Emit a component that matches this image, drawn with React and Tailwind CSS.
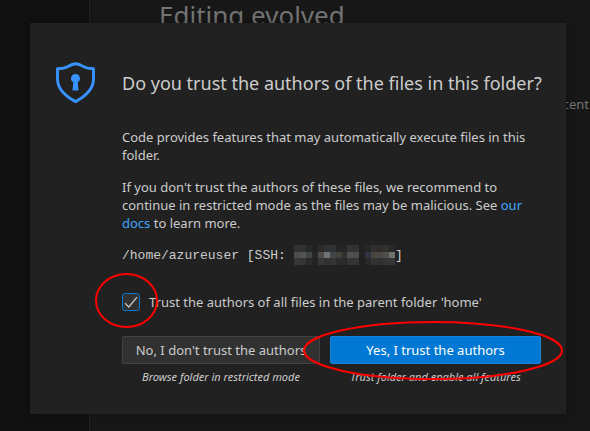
const MOSAIC = [
  ['#303332', '#2e3231', '#262929', '#202020', '#2b2b2b', '#323131', '#2f3133', '#262525', '#252626', '#343332', '#313130', '#212121', '#262626', '#31302f', '#2e2d2d', '#31302f', '#292828'],
  ['#4c4c4a', '#555553', '#434442', '#272727', '#4c4a47', '#6c7477', '#424549', '#453f3a', '#2f3030', '#51504e', '#4d4d4b', '#222222', '#2b3440', '#4a4642', '#4a4643', '#524e4a', '#70706c'],
  ['#353736', '#333534', '#292929', '#222222', '#373737', '#303030', '#353435', '#2b2b2b', '#292929', '#343434', '#343434', '#202020', '#292929', '#333333', '#2f2f2f', '#353535', '#353535'],
];

function Redacted() {
  return (
    <span className="grid h-5 w-[101px] grid-rows-[7px_6px_7px]">
      {MOSAIC.map((row, y) => (
        <span key={y} className="flex">
          {row.map((color, x) => (
            <span key={x} className="flex-1" style={{ backgroundColor: color }} />
          ))}
        </span>
      ))}
    </span>
  );
}

function Shield() {
  return (
    <svg className="h-[42px] w-10" viewBox="0 0 40 42" fill="none">
      <path
        d="M19.5 1.7C16.5 1.7 14.5 3 12 4.6C9 6.4 6 6.7 1.5 6.7V17C1.5 27.5 10 34.5 19.5 39.6C29 34.5 37.5 27.5 37.5 17V6.7C33.5 6.7 30.5 6.4 27.5 4.6C25 3 22.5 1.7 19.5 1.7Z"
        stroke="#3794ff"
        strokeWidth="2.9"
        strokeLinejoin="round"
      />
      <path d="M19.5 12a4.5 4.5 0 0 0-2.2 8.4L16.5 28.5h6l-.8-8.1A4.5 4.5 0 0 0 19.5 12Z" fill="#3794ff" />
    </svg>
  );
}

function Backdrop() {
  return (
    <div className="flex h-full">
      <div className="w-[90px] shrink-0 border-r border-[#222222] bg-[#111111]" />
      <div className="flex-1 bg-[#171717] text-[#747474]">
        <div className="h-[90px] pl-[69px] text-[26px] leading-[31px] whitespace-nowrap">Editing evolved</div>
        <div className="pt-[5px] pr-px text-right text-[13px] leading-[18px]">Recent</div>
      </div>
    </div>
  );
}

export default function App() {
  return (
    <div className="relative h-[431px] w-[590px] overflow-hidden bg-[#171717] font-['Noto_Sans',sans-serif] text-[13px] leading-[18px] text-[#cccccc]">
      <Backdrop />
      <div className="absolute top-[23px] left-[30px] flex h-[391px] w-[536px] bg-[#212121] shadow-[0_0_8px_rgba(0,0,0,0.36)]">
        <div className="w-[92px] shrink-0 pt-[39px] pl-[26px]">
          <Shield />
        </div>
        <div className="w-[430px] shrink-0 pt-[48px]">
          <h1 className="text-[18px] leading-6 whitespace-nowrap">Do you trust the authors of the files in this folder?</h1>
          <div className="mt-[33px] w-[419px]">
            <p>Code provides features that may automatically execute files in this<br />folder.</p>
            <p className="mt-[14px] whitespace-nowrap">
              If you don't trust the authors of these files, we recommend to<br />
              continue in restricted mode as the files may be malicious. See <a className="text-[#40a6ff]">our</a><br />
              <a className="text-[#40a6ff]">docs</a> to learn more.
            </p>
          </div>
          <div className="mt-[13px] flex h-5 items-center font-['Liberation_Mono',monospace] text-[13px] whitespace-pre">
            <span className="w-[172px] pt-[2px]">/home/azureuser [SSH: </span>
            <Redacted />
            <span className="pt-[2px]">]</span>
          </div>
          <div className="mt-[28px] flex h-[18px] items-center gap-[9px]">
            <span className="flex size-[18px] items-center justify-center rounded-[3px] border border-[#0078d4] bg-[#313131]">
              <svg className="size-4 shrink-0" viewBox="0 0 16 16" fill="none">
                <path d="M2 9.2L5.8 13L14 3.2" stroke="#cccccc" strokeWidth="1.2" />
              </svg>
            </span>
            <span className="whitespace-nowrap">Trust the authors of all files in the parent folder 'home'</span>
          </div>
          <div className="mt-[25px] flex gap-[10px] text-center">
            <div className="w-[198px]">
              <button className="block h-7 w-full rounded-[2px] border border-[#424242] bg-[#313131] whitespace-nowrap">No, I don't trust the authors</button>
              <p className="mt-[5px] text-[11px] leading-[15px] italic">Browse folder in restricted mode</p>
            </div>
            <div className="w-[211px]">
              <button className="block h-7 w-full rounded-[2px] border border-[#1683d8] bg-[#0078d4] text-white">Yes, I trust the authors</button>
              <p className="mt-[5px] text-[11px] leading-[15px] italic">Trust folder and enable all features</p>
            </div>
          </div>
        </div>
      </div>
      <svg className="pointer-events-none absolute inset-0 h-[431px] w-[590px]" fill="none" stroke="#ff0000" strokeWidth="2">
        <ellipse cx="126.5" cy="300.5" rx="30.5" ry="26.5" />
        <ellipse cx="433" cy="350.5" rx="129" ry="28.5" />
      </svg>
    </div>
  );
}
